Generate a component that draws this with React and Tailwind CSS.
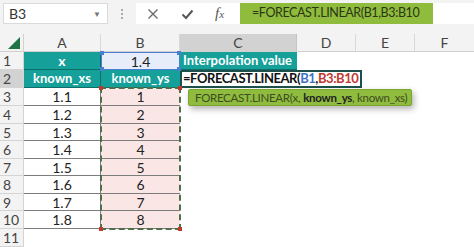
import React from 'react';

// row heights follow the screenshot (rows ~17.6px)
const rowHeights = [18, 18, 18, 18, 17, 18, 17, 18, 17, 18, 18];
const xs = ['1.1', '1.2', '1.3', '1.4', '1.5', '1.6', '1.7', '1.8'];

function HeaderRow() {
  return (
    <div className="flex h-[18px] bg-[#f3f3f3] text-[14px] text-[#444] border-b border-[#d0d0d0]">
      <div className="w-[24px] relative border-r border-[#d0d0d0]">
        <svg width="24" height="18" className="absolute left-0 top-0">
          <polygon points="8,15 20,15 20,3" fill="#217346" />
        </svg>
      </div>
      <div className="w-[77px] flex items-center justify-center border-r border-[#d8d8d8]">A</div>
      <div className="w-[79px] flex items-center justify-center border-r border-[#d8d8d8]">B</div>
      <div className="w-[117px] flex items-center justify-center bg-[#d2d2d2] border-r border-[#c4c4c4]">C</div>
      <div className="w-[59px] flex items-center justify-center border-r border-[#d8d8d8]">D</div>
      <div className="w-[59px] flex items-center justify-center border-r border-[#d8d8d8]">E</div>
      <div className="w-[59px] flex items-center justify-center">F</div>
    </div>
  );
}

function RowHead({ n, active }) {
  return (
    <div
      className={`w-[24px] shrink-0 flex items-center pl-[3px] text-[14px] text-[#444] border-r border-b border-[#d4d4d4] ${
        active ? 'bg-[#d2d2d2]' : 'bg-[#f3f3f3]'
      }`}
    >
      {n}
    </div>
  );
}

export default function App() {
  return (
    <div className="w-[474px] h-[247px] overflow-hidden bg-white relative font-['Lato','Open_Sans',sans-serif] text-[#222]">
      {/* formula bar */}
      <div className="h-[34px] bg-[#f3f3f3] pt-[3px] flex items-start">
        <div className="ml-[3px] w-[105px] h-[21px] bg-white border border-[#dadada] flex items-center pl-[5px] pr-[6px] text-[14px] text-[#333]">
          <span className="flex-1">B3</span>
          <span className="text-[8px] text-[#777]">▼</span>
        </div>
        <div className="w-[28px] h-[21px] flex flex-col items-center justify-center gap-[2px]">
          <span className="w-[2px] h-[2px] bg-[#aaa]" />
          <span className="w-[2px] h-[2px] bg-[#aaa]" />
          <span className="w-[2px] h-[2px] bg-[#aaa]" />
        </div>
        <div className="flex-1 h-[21px] bg-white flex items-center">
          <div className="w-[104px] flex items-center text-[#666]">
            <svg width="12" height="12" viewBox="0 0 12 12" className="ml-[11px]">
              <path d="M1.5 1.5 L10.5 10.5 M10.5 1.5 L1.5 10.5" stroke="#666" strokeWidth="1.3" />
            </svg>
            <svg width="13" height="12" viewBox="0 0 13 12" className="ml-[22px]">
              <path d="M1.5 6.5 L5 10 L11.5 2.5" stroke="#555" strokeWidth="2" fill="none" />
            </svg>
            <span className="ml-[21px] font-['Liberation_Serif',serif] italic text-[15px] text-[#555] leading-none">
              f<span className="text-[11px]">x</span>
            </span>
          </div>
          <div className="w-[193px] h-[21px] bg-[#8fbc3c] flex items-center pl-[12px] text-[12.5px] tracking-[-0.4px] text-[#2b3518] whitespace-nowrap overflow-hidden">
            =FORECAST.LINEAR(B1,B3:B10
          </div>
        </div>
      </div>

      <HeaderRow />

      {/* row 1 */}
      <div className="flex" style={{ height: rowHeights[0] }}>
        <RowHead n={1} />
        <div className="w-[77px] bg-[#16a09a] text-white font-bold text-[14px] flex items-center justify-center border-r border-b border-[#0d6e6a]">x</div>
        <div className="w-[79px] bg-[#e8eef9] text-[14px] flex items-center justify-center border border-[#4a7fd0] relative">
          1.4
          <span className="absolute -left-[2px] -top-[2px] w-[4px] h-[4px] bg-[#4a7fd0]" />
          <span className="absolute -right-[2px] -top-[2px] w-[4px] h-[4px] bg-[#4a7fd0]" />
          <span className="absolute -left-[2px] -bottom-[2px] w-[4px] h-[4px] bg-[#4a7fd0]" />
          <span className="absolute -right-[2px] -bottom-[2px] w-[4px] h-[4px] bg-[#4a7fd0]" />
        </div>
        <div className="w-[117px] bg-[#16a09a] text-white font-bold text-[13px] flex items-center pl-[3px] border-b border-[#0d6e6a] whitespace-nowrap">
          Interpolation value
        </div>
      </div>

      {/* row 2 */}
      <div className="flex" style={{ height: rowHeights[1] }}>
        <RowHead n={2} active />
        <div className="w-[77px] bg-[#16a09a] text-white font-bold text-[13px] flex items-center justify-center border-r border-b border-[#0d6e6a]">known_xs</div>
        <div className="w-[79px] bg-[#16a09a] text-white font-bold text-[13px] flex items-center justify-center border-b border-[#0d6e6a]">known_ys</div>
        <div className="w-[182px] bg-white border-2 border-[#1d4f4c] flex items-center pl-[1px] text-[13px] tracking-[-0.45px] font-bold text-[#111] whitespace-nowrap">
          =FORECAST.LINEAR(<span className="text-[#3d72c4]">B1</span>,<span className="text-[#c0392f]">B3:B10</span>
        </div>
      </div>

      {/* rows 3..10 */}
      {xs.map((x, i) => (
        <div key={x} className="flex" style={{ height: rowHeights[i + 2] }}>
          <RowHead n={i + 3} />
          <div className="w-[77px] text-[14px] flex items-center justify-center border-r border-b border-[#7c7c7c]">{x}</div>
          <div className="w-[79px] bg-[#fbe6e6] text-[14px] flex items-center justify-center border-b border-[#7c7c7c]">{i + 1}</div>
        </div>
      ))}

      {/* row 11 */}
      <div className="flex" style={{ height: rowHeights[10] }}>
        <RowHead n={11} />
      </div>

      {/* copy / reference outline on B3:B10 */}
      <div className="absolute left-[100px] top-[87px] w-[81px] h-[143px] border-2 border-dashed border-[#4f6e4a] pointer-events-none">
        <span className="absolute -left-[3px] -top-[3px] w-[4px] h-[4px] bg-[#c0392f]" />
        <span className="absolute -right-[3px] -top-[3px] w-[4px] h-[4px] bg-[#c0392f]" />
        <span className="absolute -left-[3px] -bottom-[3px] w-[4px] h-[4px] bg-[#c0392f]" />
        <span className="absolute -right-[3px] -bottom-[3px] w-[4px] h-[4px] bg-[#c0392f]" />
      </div>

      {/* function tooltip */}
      <div className="absolute left-[188px] top-[89px] w-[224px] h-[17px] bg-[#8fbb3e] border border-[#7aa52d] rounded-[2px] shadow-[2px_3px_6px_rgba(0,0,0,0.3)] flex items-center pl-[6px] text-[11.5px] tracking-[-0.3px] text-[#3e4d22] whitespace-nowrap">
        FORECAST.LINEAR(x, <span className="font-bold text-[#222] ml-[3px]">known_ys</span>, known_xs)
      </div>
    </div>
  );
}
